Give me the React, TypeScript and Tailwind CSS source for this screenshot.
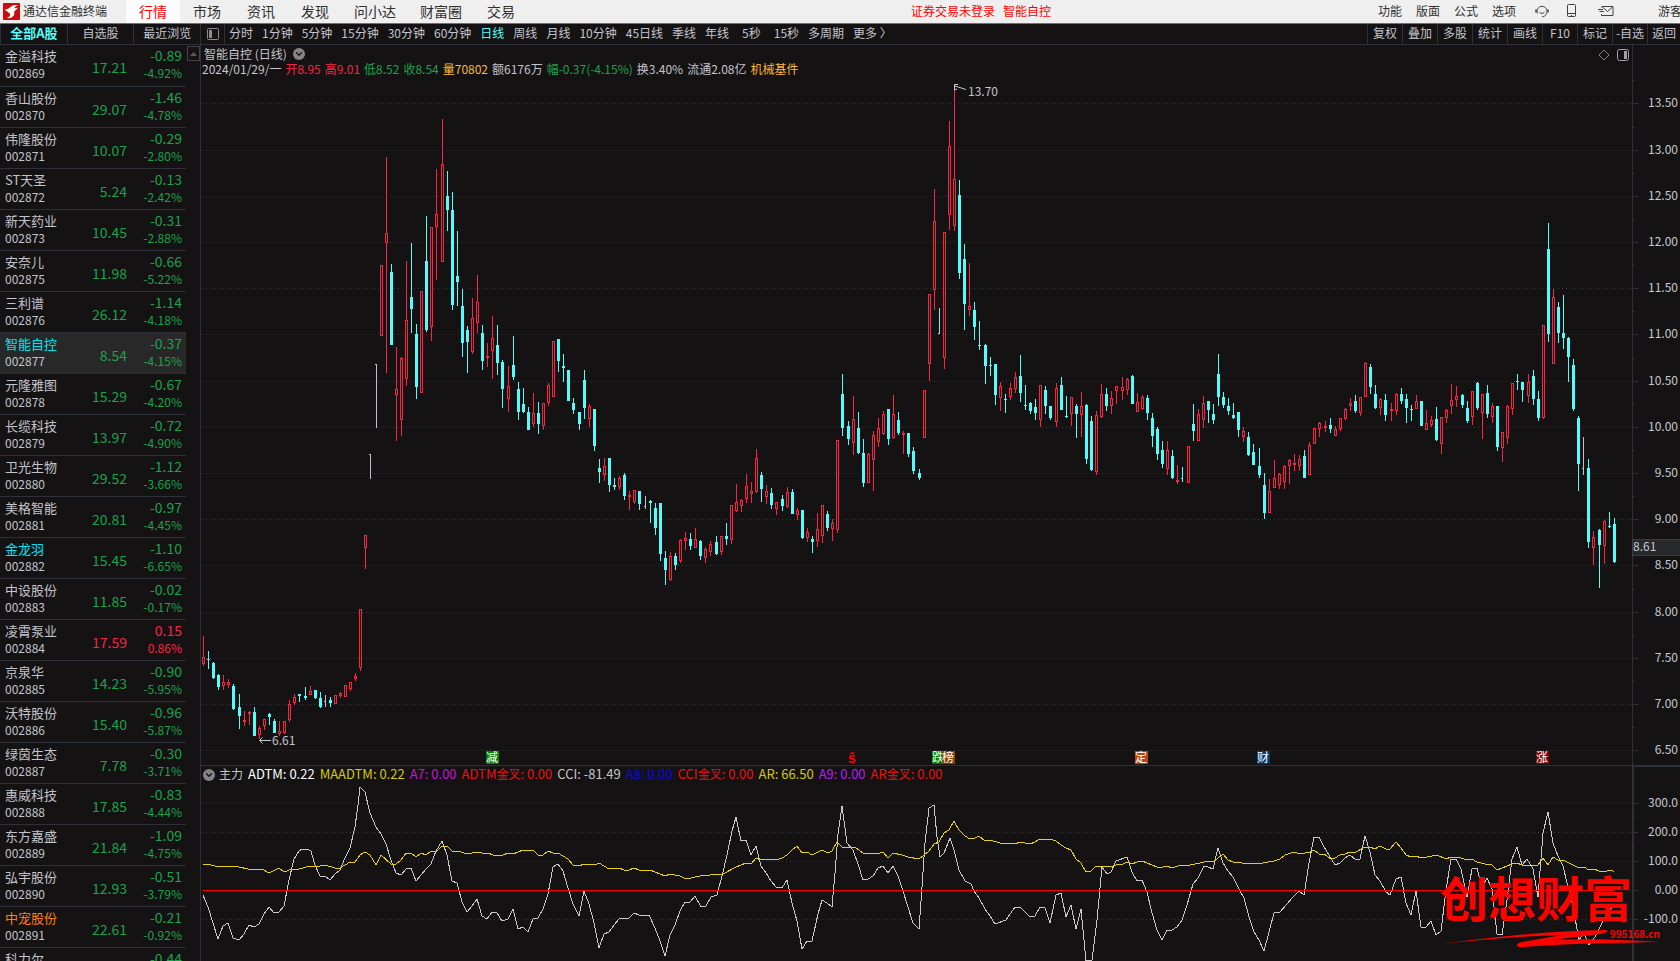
import { ChevronDown } from 'lucide-react';

type Stock = {
  name: string;
  code: string;
  price: string;
  change: string;
  percent: string;
  tone?: 'cyan' | 'orange';
};

const stocks: Stock[] = [
  { name: '金溢科技', code: '002869', price: '17.21', change: '-0.89', percent: '-4.92%' },
  { name: '香山股份', code: '002870', price: '29.07', change: '-1.46', percent: '-4.78%' },
  { name: '伟隆股份', code: '002871', price: '10.07', change: '-0.29', percent: '-2.80%' },
  { name: 'ST天圣', code: '002872', price: '5.24', change: '-0.13', percent: '-2.42%' },
  { name: '新天药业', code: '002873', price: '10.45', change: '-0.31', percent: '-2.88%' },
  { name: '安奈儿', code: '002875', price: '11.98', change: '-0.66', percent: '-5.22%' },
  { name: '三利谱', code: '002876', price: '26.12', change: '-1.14', percent: '-4.18%' },
  { name: '智能自控', code: '002877', price: '8.54', change: '-0.37', percent: '-4.15%', tone: 'cyan' },
  { name: '元隆雅图', code: '002878', price: '15.29', change: '-0.67', percent: '-4.20%' },
  { name: '长缆科技', code: '002879', price: '13.97', change: '-0.72', percent: '-4.90%' },
  { name: '卫光生物', code: '002880', price: '29.52', change: '-1.12', percent: '-3.66%' },
  { name: '美格智能', code: '002881', price: '20.81', change: '-0.97', percent: '-4.45%' },
  { name: '金龙羽', code: '002882', price: '15.45', change: '-1.10', percent: '-6.65%', tone: 'cyan' },
  { name: '中设股份', code: '002883', price: '11.85', change: '-0.02', percent: '-0.17%' },
  { name: '凌霄泵业', code: '002884', price: '17.59', change: '0.15', percent: '0.86%' },
  { name: '京泉华', code: '002885', price: '14.23', change: '-0.90', percent: '-5.95%' },
  { name: '沃特股份', code: '002886', price: '15.40', change: '-0.96', percent: '-5.87%' },
  { name: '绿茵生态', code: '002887', price: '7.78', change: '-0.30', percent: '-3.71%' },
  { name: '惠威科技', code: '002888', price: '17.85', change: '-0.83', percent: '-4.44%' },
  { name: '东方嘉盛', code: '002889', price: '21.84', change: '-1.09', percent: '-4.75%' },
  { name: '弘宇股份', code: '002890', price: '12.93', change: '-0.51', percent: '-3.79%' },
  { name: '中宠股份', code: '002891', price: '22.61', change: '-0.21', percent: '-0.92%', tone: 'orange' },
  { name: '科力尔', code: '002892', price: '11.02', change: '-0.44', percent: '-3.84%' },
];

const menus = ['行情', '市场', '资讯', '发现', '问小达', '财富圈', '交易'];
const listTabs = ['全部A股', '自选股', '最近浏览'];
const periods = [
  '分时', '1分钟', '5分钟', '15分钟', '30分钟', '60分钟', '日线', '周线', '月线', '10分钟',
  '45日线', '季线', '年线', '5秒', '15秒', '多周期', '更多 〉',
];
const tools = ['复权', '叠加', '多股', '统计', '画线', 'F10', '标记', '-自选', '返回'];

const quote = [
  { text: '2024/01/29/一', color: 'text-[#c4c4cc]' },
  { text: '开8.95', color: 'text-[#f92444]' },
  { text: '高9.01', color: 'text-[#f92444]' },
  { text: '低8.52', color: 'text-[#1ba34c]' },
  { text: '收8.54', color: 'text-[#1ba34c]' },
  { text: '量70802', color: 'text-[#f9b93c]' },
  { text: '额6176万', color: 'text-[#c4c4cc]' },
  { text: '幅-0.37(-4.15%)', color: 'text-[#1ba34c]' },
  { text: '换3.40%', color: 'text-[#c4c4cc]' },
  { text: '流通2.08亿', color: 'text-[#c4c4cc]' },
  { text: '机械基件', color: 'text-[#f9b93c]' },
];

// cross = golden cross signal, its suffix is set one size smaller
const indicators = [
  { name: 'ADTM', value: '0.22', color: 'text-white' },
  { name: 'MAADTM', value: '0.22', color: 'text-[#d8c80a]' },
  { name: 'A7', value: '0.00', color: 'text-[#c414d8]' },
  { name: 'ADTM', cross: true, value: '0.00', color: 'text-[#f01010]' },
  { name: 'CCI', value: '-81.49', color: 'text-[#c4c4cc]' },
  { name: 'A8', value: '0.00', color: 'text-[#0808f0]' },
  { name: 'CCI', cross: true, value: '0.00', color: 'text-[#f01010]' },
  { name: 'AR', value: '66.50', color: 'text-[#d8c80a]' },
  { name: 'A9', value: '0.00', color: 'text-[#b41ef0]' },
  { name: 'AR', cross: true, value: '0.00', color: 'text-[#f01010]' },
];

// u = up, d = down, f = flat, t = down with a single tick; then high, body top, body bottom, low
const candles = `
u636,657,664,666 d651,659,660,669 d662,663,678,679 d674,675,687,690 u675,682,686,690 u679,682,685,688 d684,686,709,710 d694,707,716,729
u711,720,722,726 u711,712,714,725 d707,712,736,736 u726,728,735,739 u719,719,726,730 d713,714,717,725 d719,721,733,733 u721,731,734,736
u721,721,733,734 u700,704,720,722 u694,697,703,705 d694,694,696,702 d687,696,698,700 u686,691,695,695 d690,690,698,699 d692,698,707,708
f695,701,702,707 d697,700,703,707 u695,695,704,704 u692,693,696,698 u685,685,697,697 u682,682,689,691 u673,676,679,681 u609,609,668,671
u535,535,548,569 f454,454,455,479 f364,364,365,428 u265,265,336,336 u157,233,243,373 d264,272,345,345 u347,389,395,441 u357,358,420,436
u261,320,379,386 d243,297,309,333 d324,334,387,399 u291,291,393,393 d216,261,330,332 u227,227,327,341 u169,214,227,280 u119,164,262,262
d171,196,210,231 d192,210,305,310 d231,276,282,306 d289,306,343,357 d326,330,342,373 u298,318,352,354 u275,302,323,333 d325,333,361,370
u343,356,358,367 u316,338,351,379 d325,345,363,375 d360,362,389,408 u366,386,399,412 d336,365,377,380 d382,389,412,420 d388,404,412,413
d407,412,430,430 u393,413,424,427 d402,413,424,434 u403,403,426,430 u383,385,403,406 u341,341,397,397 d339,339,361,372 d354,366,368,382
d370,370,401,401 d398,403,410,414 d412,412,424,430 d370,380,408,419 u404,406,419,427 d409,409,446,451 d459,468,472,483 u458,466,475,481
d458,458,485,492 d478,485,487,490 u476,478,487,490 d473,475,496,500 u491,495,497,510 u490,490,502,504 d491,491,504,510 f496,506,507,509
d500,501,503,523 d503,508,528,535 d503,503,554,561 d551,558,570,585 u552,556,580,581 d553,556,565,570 u539,540,561,563 u532,538,541,550
d533,539,546,550 u528,539,548,548 d540,541,556,560 u547,549,558,563 u541,544,552,556 d536,542,554,555 u536,536,552,555 d523,536,539,545
u505,505,540,544 u484,502,511,512 u499,500,506,512 u474,486,499,503 u482,491,494,503 u449,458,492,493 d472,475,489,502 u485,491,497,504
d488,493,505,509 u502,502,509,515 d495,499,506,511 u487,492,507,508 d489,492,514,514 u508,510,515,520 d510,510,538,539 u528,532,538,542
d536,539,542,553 u513,529,541,547 u505,505,536,543 d511,514,528,531 u519,523,529,541 u440,440,530,533 d374,394,428,436 d421,426,439,445
u396,419,443,455 d412,428,453,454 d439,453,483,487 u453,454,483,483 u431,435,460,491 u418,428,442,447 u411,414,434,435 d409,409,439,445
u395,414,438,439 d412,420,433,435 u431,433,435,454 d433,433,454,457 d447,451,471,474 d469,473,478,480 u390,390,438,438 u294,294,364,381
u189,221,290,310 t308,333,334,334 u232,232,358,369 u121,146,215,230 u88,179,226,231 d180,195,273,279 d244,259,304,330 u263,306,310,316
d302,310,327,340 d321,345,346,350 d344,345,366,384 d357,365,366,376 d364,364,395,405 u382,386,398,411 d394,399,400,413 u383,388,397,400
u372,377,389,393 d355,376,393,402 d385,405,406,410 d402,403,411,414 d399,407,413,420 u385,385,420,427 d386,390,406,414 d406,406,418,420
u383,388,422,427 d377,385,410,410 d396,416,417,418 u397,397,414,426 d404,406,414,438 u392,406,415,437 d404,405,459,464 d416,421,470,471
u411,415,472,475 u384,394,417,418 d388,394,406,411 u391,398,406,414 u386,386,391,404 u377,387,391,400 u378,379,390,395 d375,376,404,404
u393,402,412,412 u395,397,409,410 d395,398,413,420 d413,418,436,447 d427,429,454,460 d441,450,464,468 u441,450,469,475 d450,456,478,479
u465,480,482,484 t467,478,479,482 u446,446,483,483 d404,424,431,441 u409,414,441,441 u396,403,420,428 d401,401,410,423 d404,414,420,424
d354,374,397,406 d392,397,405,408 d398,406,411,415 d403,415,418,419 d412,412,430,437 u427,431,437,442 d432,437,455,456 d444,452,465,465
d448,466,475,478 d473,485,513,519 u479,491,513,513 u460,478,488,488 u473,474,485,489 u465,466,482,489 u459,460,466,484 u454,463,465,471
u455,459,466,471 d450,456,478,478 u442,445,475,475 u428,428,444,444 u422,423,429,437 u421,426,428,432 d418,425,429,433 u426,429,436,436
u418,418,429,431 u408,409,419,420 u398,403,406,411 d395,401,411,413 u397,397,413,416 u362,363,397,397 d364,367,387,394 d385,394,408,409
u398,399,408,415 d394,400,415,421 u403,409,411,421 u393,394,411,415 d388,394,401,404 d394,399,408,423 d405,409,410,421 u395,401,409,409
d401,401,426,426 u410,423,430,430 u416,420,425,427 d407,419,440,441 u417,417,444,454 u409,410,418,423 u384,400,406,414 u386,396,400,407
d394,395,405,408 d401,408,421,423 u391,391,417,425 d382,383,408,410 u394,394,413,439 d385,393,414,418 u403,406,417,423 d406,406,447,451
u432,432,448,462 u405,406,438,444 u383,383,409,415 d374,381,382,390 d382,382,390,402 u374,382,396,403 d370,376,399,405 d391,399,418,421
u325,325,418,419 d223,249,334,342 u289,297,364,364 d302,307,333,343 d295,333,338,349 d337,338,357,382 d359,365,409,411 d416,418,464,491
f437,468,469,475 d459,468,542,548 u531,537,548,565 d529,530,545,588 u520,521,546,564 d512,526,527,528 d518,524,562,563
`
  .trim()
  .split(/\s+/)
  .map((item) => ({ kind: item[0], y: item.slice(1).split(',').map(Number) }));

const cciLine =
  '203,895 208,907 213,923 218,939 223,926 228,923 233,938 239,940 244,934 249,925 254,927 259,924 264,914 269,907 274,913 279,912 284,906 289,880 294,859 299,851 302,849 307,849 311,851 315,865 320,876 325,876 330,880 335,874 340,870 345,858 350,848 355,827 358,805 360,787 365,792 370,813 376,827 381,834 386,844 391,860 396,873 401,875 406,869 411,868 416,881 421,875 426,869 431,864 436,851 442,841 447,855 452,881 457,883 462,902 467,912 472,906 477,899 482,916 487,919 492,912 497,913 502,921 508,919 513,909 518,929 523,927 528,932 533,919 538,918 543,909 548,894 553,867 558,864 563,871 568,888 573,904 579,916 584,891 589,904 594,923 599,948 604,934 609,932 614,925 619,919 629,918 634,913 639,915 649,915 655,928 660,941 665,956 670,935 675,925 680,911 685,902 690,902 695,896 701,907 706,906 711,897 717,895 723,872 727,855 732,831 736,817 741,841 746,840 751,855 756,846 761,866 766,873 771,881 776,887 782,888 787,880 792,903 797,921 802,949 807,941 812,941 818,914 822,900 827,903 832,907 835,873 838,834 842,806 847,843 853,850 858,864 863,880 868,879 873,876 878,868 883,866 888,873 893,866 898,876 903,891 908,907 913,923 919,929 922,887 925,843 929,808 934,805 937,837 940,857 944,853 950,838 954,850 959,870 965,881 971,884 974,891 979,898 985,909 990,916 995,924 1006,920 1015,907 1020,907 1030,917 1035,916 1040,907 1045,908 1050,923 1056,895 1061,893 1066,917 1071,905 1076,929 1081,909 1086,961 1092,960 1097,920 1102,867 1107,874 1111,872 1116,861 1127,857 1132,872 1137,881 1142,880 1147,892 1152,913 1157,930 1162,940 1167,930 1172,930 1177,927 1182,920 1187,905 1193,884 1198,878 1204,866 1208,867 1213,869 1218,848 1223,863 1228,871 1233,877 1240,891 1244,898 1249,917 1254,932 1259,940 1264,951 1274,913 1280,912 1293,897 1299,891 1304,895 1309,863 1314,837 1319,837 1324,847 1329,855 1335,865 1340,863 1345,858 1350,855 1356,860 1360,859 1365,836 1370,852 1375,875 1380,881 1386,892 1390,895 1396,879 1401,877 1406,903 1411,915 1416,891 1421,927 1426,927 1431,921 1436,935 1441,931 1446,890 1451,859 1456,859 1461,869 1467,897 1472,869 1477,868 1482,887 1487,878 1492,889 1497,934 1502,935 1507,900 1512,859 1517,847 1522,865 1527,859 1533,869 1538,897 1543,833 1548,812 1553,843 1558,856 1563,866 1568,887 1573,907 1579,940 1584,933 1589,945 1595,937 1601,925 1606,915 1614,905';

const arLine =
  '203,865 208,864 218,867 227,866 239,867 248,869 262,869 269,873 279,868 284,872 292,869 299,869 310,866 315,867 325,865 335,868 340,868 350,862 355,862 360,855 365,852 370,855 376,865 381,855 391,864 396,864 401,860 406,853 411,853 416,857 421,853 426,855 431,851 436,852 442,846 447,846 452,851 458,851 467,854 477,852 482,853 488,853 493,855 503,855 508,853 513,854 523,850 533,850 538,855 543,855 548,851 553,853 558,853 568,859 573,865 579,866 584,864 595,865 599,863 609,869 619,868 624,870 629,870 634,868 639,870 650,870 665,876 670,874 680,876 686,879 700,876 710,875 723,874 736,867 746,863 751,864 756,858 761,860 771,859 776,860 782,858 787,855 792,850 797,846 802,853 807,852 812,855 822,850 828,853 832,851 837,842 842,847 847,848 855,847 863,853 877,854 883,852 888,858 893,853 902,855 908,857 919,859 924,855 929,851 934,844 939,842 944,833 949,830 954,821 959,830 965,836 970,839 975,838 979,836 985,841 990,840 1000,843 1015,844 1020,842 1030,844 1035,842 1040,839 1050,839 1056,841 1061,845 1066,848 1071,850 1076,859 1081,863 1086,872 1091,871 1096,866 1103,866 1112,867 1116,865 1123,864 1127,862 1132,864 1137,862 1142,861 1152,865 1157,867 1163,867 1167,866 1172,868 1178,866 1190,865 1200,863 1208,861 1213,862 1218,858 1223,854 1228,860 1233,862 1242,863 1254,864 1263,863 1274,861 1280,859 1285,855 1294,852 1300,854 1310,852 1314,850 1319,854 1324,854 1331,859 1335,858 1340,855 1345,854 1350,852 1356,852 1365,847 1370,847 1375,849 1380,846 1386,849 1390,849 1396,842 1401,848 1406,855 1411,857 1416,856 1421,858 1427,857 1437,855 1446,859 1451,857 1461,858 1467,860 1472,859 1477,862 1485,864 1492,865 1497,870 1502,868 1512,864 1517,863 1522,865 1533,866 1538,865 1543,858 1548,865 1553,857 1558,860 1565,861 1573,865 1579,868 1584,867 1589,870 1594,869 1599,871 1607,871 1612,870 1614,872';

const priceTicks = [
  { label: '13.50', y: 103 },
  { label: '13.00', y: 150 },
  { label: '12.50', y: 196 },
  { label: '12.00', y: 242 },
  { label: '11.50', y: 288 },
  { label: '11.00', y: 334 },
  { label: '10.50', y: 381 },
  { label: '10.00', y: 427 },
  { label: '9.50', y: 473 },
  { label: '9.00', y: 519 },
  { label: '8.50', y: 565 },
  { label: '8.00', y: 612 },
  { label: '7.50', y: 658 },
  { label: '7.00', y: 704 },
  { label: '6.50', y: 750 },
];

const cciTicks = [
  { label: '300.0', y: 803 },
  { label: '200.0', y: 832 },
  { label: '100.0', y: 861 },
  { label: '0.00', y: 890 },
  { label: '-100.0', y: 919 },
];

const markers = [
  { text: '减', x: 486, fill: '#008000' },
  { text: '跌', x: 932, fill: '#008000' },
  { text: '榜', x: 942, fill: '#8a4200' },
  { text: '定', x: 1135, fill: '#b8440e' },
  { text: '财', x: 1257, fill: '#003a74' },
  { text: '涨', x: 1536, fill: '#800000' },
];

const nameColor = (tone?: string) =>
  tone === 'cyan' ? 'text-[#00e4f4]' : tone === 'orange' ? 'text-[#ff8010]' : 'text-[#c4c4cc]';

function Candle({ index, kind, y }: { index: number; kind: string; y: number[] }) {
  const [high, top, bottom, low] = y;
  const x = 203 + Math.floor(index * 5.0747 + 0.525);

  if (kind === 'f' || kind === 't') {
    const fill = kind === 'f' ? '#c0c0cc' : '#54fcfc';
    return (
      <g fill={fill}>
        <rect x={x} y={high} width={1} height={low - high} />
        <rect x={x - 1} y={top} width={1} height={1} />
      </g>
    );
  }
  if (kind === 'd') {
    return (
      <g fill="#54fcfc">
        <rect x={x} y={high} width={1} height={low - high} />
        <rect x={x - 1} y={top} width={3} height={bottom - top} />
      </g>
    );
  }
  return (
    <g fill="#f92444">
      <rect x={x} y={high} width={1} height={low - high} />
      <rect x={x - 1} y={top} width={3} height={bottom - top} />
      {bottom - top > 2 && <rect x={x} y={top + 1} width={1} height={bottom - top - 2} fill="#141213" />}
    </g>
  );
}

function Grid({ ticks, minor }: { ticks: { label: string; y: number }[]; minor: number }) {
  return (
    <g shapeRendering="crispEdges">
      {ticks.map((t) => (
        <g key={t.label}>
          <line x1={202} x2={1631} y1={t.y + 0.5} y2={t.y + 0.5} stroke="#3a3a40" strokeDasharray="1 3" />
          <rect x={1632} y={t.y} width={6} height={1} fill="#2e303c" />
          <rect x={1632} y={t.y + minor} width={3} height={1} fill="#2e303c" />
        </g>
      ))}
    </g>
  );
}

function AxisLabels({ ticks }: { ticks: { label: string; y: number }[] }) {
  return (
    <g className="text-xs" fill="#c8c8d0" textAnchor="end">
      {ticks.map((t) => (
        <text key={t.label} x={1678} y={t.y + 4}>
          {t.label}
        </text>
      ))}
    </g>
  );
}

function CollapseButton({ label }: { label: string }) {
  return (
    <button aria-label={label} className="flex h-3 w-3 items-center justify-center rounded-full bg-[#848484] text-[#141213]">
      <ChevronDown size={10} strokeWidth={3} />
    </button>
  );
}

function TopMenu() {
  return (
    <header className="flex h-6 shrink-0 items-stretch whitespace-nowrap border-b border-[#707070] bg-[#efefef] leading-5 text-[#303030]">
      <div className="flex w-[126px] items-center gap-[3px] pb-0.5 pl-[3px] text-xs">
        <svg className="mt-0.5" width="17" height="17" viewBox="0 0 17 17">
          <rect width="17" height="17" rx="1" fill="#c80c10" />
          <path
            d="M2 6.500C5 6.500 6 5 8.500 3.200C10 2.200 12 2 15 2C13 2.800 12 3.800 11.600 5.200C12.800 5.400 14 5 15 4.600C13.600 6.800 12 7.800 11 9C12 11 11 13 8.500 14.500C6.500 15.600 5 15.400 4 14.800C7 13.800 8 12 6.500 10.200C5 8.600 3 8.500 2 6.500Z"
            fill="#fff"
          />
        </svg>
        <span>通达信金融终端</span>
      </div>
      <nav className="flex">
        {menus.map((m, i) => (
          <a
            key={m}
            href="#"
            className={`flex items-center pb-0.5 text-sm ${m.length > 2 ? 'px-3' : 'px-[13px]'} ${
              i === 0 ? 'bg-[#fcfcfc] text-[#ff0000]' : ''
            }`}
          >
            {m}
          </a>
        ))}
      </nav>
      <div className="ml-auto flex items-center gap-2 pb-0.5 pl-14 text-xs text-[#ff0000]">
        <span>证券交易未登录</span>
        <span>智能自控</span>
      </div>
      {/* The guest entry runs past the right edge */}
      <div className="ml-auto flex w-[302px] items-center pb-0.5 text-xs">
        <div className="flex gap-[14px]">
          {['功能', '版面', '公式', '选项'].map((t) => (
            <a key={t} href="#">
              {t}
            </a>
          ))}
        </div>
        <div className="ml-[19px] flex items-center">
          <button aria-label="客服">
            <svg width="14" height="14" viewBox="0 0 14 14" fill="none" stroke="#404040">
              <path d="M2.500 9.500A5 5 0 1 1 11.500 9.500" />
              <path d="M11.500 9.500C10.800 11.500 9 12.800 7 12.800" />
              <path d="M4.500 8C5.500 9.800 8.500 9.800 9.500 8" />
              <path d="M1 5.500V8.500M13 5.500V8.500" strokeWidth="1.500" />
            </svg>
          </button>
          <button aria-label="手机" className="ml-[18px]">
            <svg width="10" height="14" viewBox="0 0 10 14" fill="none" stroke="#404040">
              <rect x="0.500" y="0.500" width="8" height="12" rx="1" />
              <path d="M0.500 9.500H8.500M4 11.500H5" />
            </svg>
          </button>
          <button aria-label="消息" className="ml-[21px]">
            <svg width="16" height="12" viewBox="0 0 16 12" fill="none" stroke="#404040">
              <path d="M4 3V1.500H15V10.500H3.500V9" />
              <path d="M5 2.500L9.500 6.500L14.500 2" />
              <path d="M0 4.500H5M1.500 6.500H6" strokeWidth="1.200" />
            </svg>
          </button>
        </div>
        <a href="#" className="ml-auto -mr-[2px]">
          游客
        </a>
      </div>
    </header>
  );
}

function Toolbar() {
  return (
    <div className="flex h-[21px] shrink-0 items-stretch whitespace-nowrap border-b border-[#2e303c] text-xs text-[#c4c4cc]">
      <div className="flex w-[201px] shrink-0 border-r border-[#2e303c]">
        {listTabs.map((t, i) => (
          <button
            key={t}
            className={`flex-1 border-l border-[#2e303c] pb-0.5 ${i === 0 ? 'text-[13px] font-bold text-[#54fcfc]' : ''}`}
          >
            {t}
          </button>
        ))}
      </div>
      <button aria-label="侧栏" className="flex w-6 shrink-0 items-center justify-center border-r border-[#2e303c]">
        <svg width="12" height="12" viewBox="0 0 12 12">
          <rect x="0.500" y="0.500" width="11" height="11" rx="1" fill="none" stroke="#8c8c90" />
          <rect x="2" y="2" width="3" height="8" fill="#8c8c90" />
        </svg>
      </button>
      <div className="flex gap-[9px] pl-1">
        {periods.map((p) => (
          <button key={p} className={`pb-0.5 ${p === '日线' ? 'text-[#54fcfc]' : ''} ${p === '5秒' ? 'px-1' : ''}`}>
            {p}
          </button>
        ))}
      </div>
      <div className="ml-auto flex">
        {tools.map((t) => (
          <button key={t} className="w-[35px] border-l border-[#2e303c] pb-0.5 last:w-[33px]">
            {t}
          </button>
        ))}
      </div>
    </div>
  );
}

function StockList() {
  return (
    <aside className="flex w-[201px] shrink-0 items-start overflow-hidden border-r border-[#2e303c]">
      <table className="w-[186px] table-fixed border-collapse">
        <tbody>
          {stocks.map((s) => {
            const trend = s.change.startsWith('-') ? 'text-[#1ba34c]' : 'text-[#f92444]';
            return (
              <tr
                key={s.code}
                className={`h-[41px] border-b border-[#2e303c] align-top ${s.code === '002877' ? 'bg-[#282828]' : ''}`}
              >
                <td className="w-20 p-0 pl-[5px] pt-[3px]">
                  <div className={`text-[13px] leading-4 ${nameColor(s.tone)}`}>{s.name}</div>
                  <div className="text-xs leading-[18px] text-[#c4c4cc]">{s.code}</div>
                </td>
                <td className={`w-[47px] p-0 pt-3 text-right text-sm leading-5 ${trend}`}>{s.price}</td>
                <td className={`p-0 pr-1 pt-0.5 text-right ${trend}`}>
                  <div className="text-sm leading-[17px]">{s.change}</div>
                  <div className="text-xs leading-[18px]">{s.percent}</div>
                </td>
              </tr>
            );
          })}
        </tbody>
      </table>
      <button
        aria-label="向上滚动"
        className="ml-px mt-px flex h-[15px] w-[13px] items-center justify-center border border-[#44444a]"
      >
        <svg width="7" height="4" viewBox="0 0 7 4">
          <path d="M3.500 0L7 4H0Z" fill="#5a5a60" />
        </svg>
      </button>
    </aside>
  );
}

function PriceChart() {
  return (
    <section>
      <div className="flex h-[34px] whitespace-nowrap text-xs">
        <div className="flex-1 pl-px pt-px">
          <div className="flex h-4 items-center gap-[6px] pl-[2px]">
            <h1 className="text-[#c4c4cc]">智能自控 (日线)</h1>
            <CollapseButton label="指标菜单" />
          </div>
          <div className="flex h-[14px] items-center gap-1">
            {quote.map((q) => (
              <span key={q.text} className={q.color}>
                {q.text}
              </span>
            ))}
          </div>
        </div>
        <div className="flex gap-[7px] pr-[3px] pt-1">
          <svg width="12" height="12" viewBox="0 0 12 12">
            <path d="M6 1L11 6L6 11L1 6Z" fill="none" stroke="#808086" />
          </svg>
          <svg width="12" height="12" viewBox="0 0 12 12">
            <rect x="0.500" y="0.500" width="11" height="11" rx="2" fill="none" stroke="#a0a0a4" />
            <rect x="7" y="2" width="3" height="8" fill="#a0a0a4" />
          </svg>
        </div>
        <div className="w-12 border-l border-[#2e303c]" />
      </div>
      <svg className="h-auto w-full" viewBox="201 79 1479 686">
        <rect x={1632} y={79} width={1} height={686} fill="#2e303c" />
        <Grid ticks={priceTicks} minor={-23} />
        <g shapeRendering="crispEdges">
          {candles.map((c, i) => (
            <Candle key={i} index={i} kind={c.kind} y={c.y} />
          ))}
        </g>
        <g fill="none" stroke="#c8c8d0">
          <path d="M955 86L966 89.500M958 84.500H954.500V90L957 89" />
          <path d="M260 740.500H271M262.500 737.500L259.500 740.500L262.500 743.500" />
        </g>
        <g className="text-xs" fill="#c4c4cc">
          <text x={968} y={96}>
            13.70
          </text>
          <text x={272} y={745}>
            6.61
          </text>
        </g>
        {markers.map((m) => (
          <g key={m.text}>
            <rect x={m.x} y={751} width={13} height={13} fill={m.fill} />
            <text x={m.x + 6} y={762} textAnchor="middle" fill="#fff" className="text-xs">
              {m.text}
            </text>
          </g>
        ))}
        <text x={852} y={763} textAnchor="middle" fill="#ff0000" className="text-sm font-bold">
          ŝ
        </text>
        <AxisLabels ticks={priceTicks} />
        <rect x={1632.5} y={539.5} width={48} height={16} fill="#262829" stroke="#3a3c44" />
        <text x={1633} y={551} fill="#c8c8d0" className="text-xs">
          8.61
        </text>
      </svg>
    </section>
  );
}

function IndicatorChart() {
  return (
    <section className="relative border-t border-[#2e303c]">
      <div className="flex h-[17px] whitespace-nowrap text-[13px] leading-[15px]">
        <div className="flex flex-1 items-center gap-1 pl-[2px]">
          <CollapseButton label="副图菜单" />
          <div className="flex gap-[5px] pb-0.5">
            <span className="text-xs leading-[15px] text-[#c4c4cc]">主力</span>
            {indicators.map((t) => (
              <span key={t.name + (t.cross ? 'x' : '')} className={t.color}>
                {t.name}
                {t.cross && <span className="text-xs leading-[15px]">金叉</span>}: {t.value}
              </span>
            ))}
          </div>
        </div>
        <div className="w-12 border-l-2 border-t border-[#2e303c]" />
      </div>
      <svg className="h-auto w-full" viewBox="201 783 1479 178">
        <rect x={1632} y={783} width={2} height={178} fill="#2e303c" />
        <Grid ticks={cciTicks} minor={15} />
        <g fill="none" strokeWidth={1} shapeRendering="crispEdges">
          <polyline points={cciLine} stroke="#c8c8c8" />
          <polyline points={arLine} stroke="#e6d010" />
        </g>
        <rect x={203} y={890} width={1411} height={1} fill="#ff0000" />
        <AxisLabels ticks={cciTicks} />
      </svg>
      {/* Site stamp over the lower right corner */}
      <div className="absolute bottom-3 right-4 flex w-[224px] flex-col text-[#fa0400]">
        <div className="pb-2 text-5xl font-bold leading-[50px]">创想财富</div>
        <div className="relative">
          <svg width="224" height="20" viewBox="0 0 224 20">
            <path
              d="M2 15C60 7 110 2 166 1C170 2 166 4 160 5L112 11C150 9 190 11 220 13C180 14 130 14 84 18C76 19 74 15 82 13L122 6C80 7 40 11 2 15Z"
              fill="#fa0400"
            />
          </svg>
          <span className="absolute right-1 top-0 text-[10px] font-bold leading-[10px]">995168.cn</span>
        </div>
      </div>
    </section>
  );
}

export default function App() {
  return (
    <div className="flex h-screen flex-col overflow-hidden bg-[#141213] font-['Noto_Sans_CJK_SC',sans-serif]">
      <TopMenu />
      <Toolbar />
      <div className="flex min-h-0 flex-1">
        <StockList />
        <main className="min-w-0 flex-1">
          <PriceChart />
          <IndicatorChart />
        </main>
      </div>
    </div>
  );
}
